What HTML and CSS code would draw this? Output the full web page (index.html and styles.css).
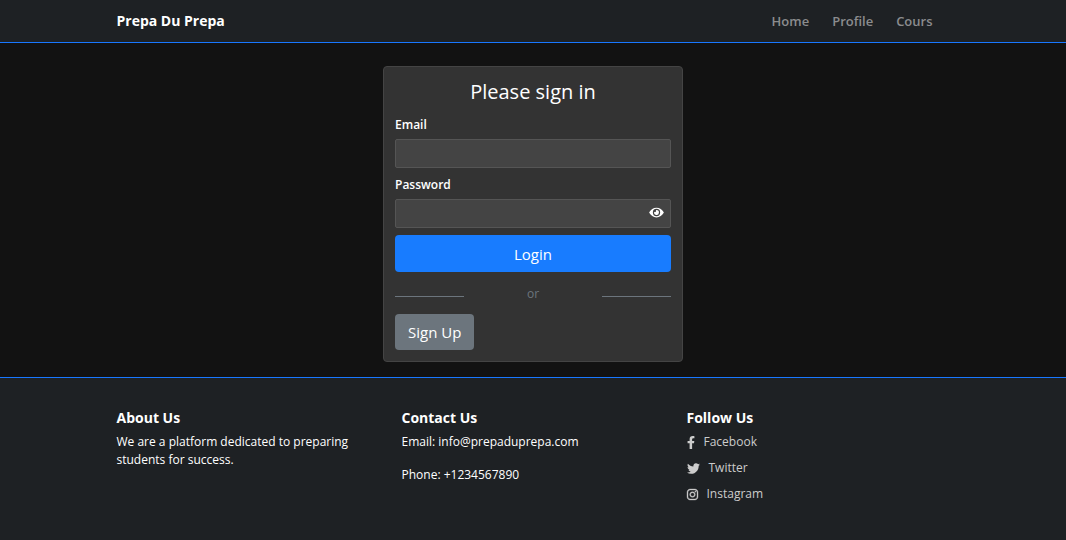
FILE: index.html
```html
<!DOCTYPE html>
<html lang="en">
<head>
<meta charset="utf-8">
<meta name="viewport" content="width=device-width, initial-scale=1">
<title>Prepa Du Prepa</title>
<link rel="stylesheet" href="styles.css">
</head>
<body>
<header class="navbar">
  <div class="container navbar-inner">
    <a class="brand" href="#">Prepa Du Prepa</a>
    <nav class="nav-links">
      <a href="#">Home</a>
      <a href="#">Profile</a>
      <a href="#">Cours</a>
    </nav>
  </div>
</header>
<main class="main">
  <section class="card">
    <h1 class="card-title">Please sign in</h1>
    <form class="form">
      <label class="label" for="email">Email</label>
      <input class="input" type="email" id="email">
      <label class="label" for="password">Password</label>
      <div class="password-field">
        <input class="input" type="password" id="password">
        <button class="toggle" type="button" aria-label="Show password">
          <svg class="eye" viewBox="0 0 576 512" aria-hidden="true"><path fill="currentColor" d="M572.52 241.4C518.29 135.59 410.93 64 288 64S57.68 135.64 3.48 241.41a32.35 32.35 0 0 0 0 29.19C57.71 376.41 165.07 448 288 448s230.32-71.64 284.52-177.41a32.35 32.35 0 0 0 0-29.19zM288 400a144 144 0 1 1 144-144 143.93 143.93 0 0 1-144 144zm0-240a95.31 95.31 0 0 0-25.31 3.79 47.85 47.85 0 0 1-66.9 66.9A95.78 95.78 0 1 0 288 160z"/></svg>
        </button>
      </div>
      <button class="btn btn-primary" type="submit">Login</button>
      <div class="divider"><span class="rule"></span><span class="or">or</span><span class="rule"></span></div>
      <button class="btn btn-secondary" type="button">Sign Up</button>
    </form>
  </section>
</main>
<footer class="footer">
  <div class="container footer-grid">
    <section>
      <h2 class="footer-title">About Us</h2>
      <p>We are a platform dedicated to preparing students for success.</p>
    </section>
    <section>
      <h2 class="footer-title">Contact Us</h2>
      <p>Email: info@prepaduprepa.com</p>
      <p>Phone: +1234567890</p>
    </section>
    <section>
      <h2 class="footer-title">Follow Us</h2>
      <ul class="social">
        <li><a href="#"><svg class="icon icon-facebook" viewBox="0 0 320 512" aria-hidden="true"><path fill="currentColor" d="M279.14 288l14.22-92.66h-88.91v-60.13c0-25.35 12.42-50.06 52.24-50.06h40.42V6.26S260.43 0 225.36 0c-73.22 0-121.08 44.38-121.08 124.72v70.62H22.89V288h81.39v224h100.17V288z"/></svg>Facebook</a></li>
        <li><a href="#"><svg class="icon icon-twitter" viewBox="0 0 512 512" aria-hidden="true"><path fill="currentColor" d="M459.37 151.716c.325 4.548.325 9.097.325 13.645 0 138.72-105.583 298.558-298.558 298.558-59.452 0-114.68-17.219-161.137-47.106 8.447.974 16.568 1.299 25.34 1.299 49.055 0 94.213-16.568 130.274-44.832-46.132-.975-84.792-31.188-98.112-72.772 6.498.974 12.995 1.624 19.818 1.624 9.421 0 18.843-1.3 27.614-3.573-48.081-9.747-84.143-51.98-84.143-102.985v-1.299c13.969 7.797 30.214 12.67 47.431 13.319-28.264-18.843-46.781-51.005-46.781-87.391 0-19.492 5.197-37.36 14.294-52.954 51.655 63.675 129.3 105.258 216.365 109.807-1.624-7.797-2.599-15.918-2.599-24.04 0-57.828 46.782-104.934 104.934-104.934 30.213 0 57.502 12.67 76.67 33.137 23.715-4.548 46.456-13.32 66.599-25.34-7.798 24.366-24.366 44.833-46.132 57.827 21.117-2.273 41.584-8.122 60.426-16.243-14.292 20.791-32.161 39.308-52.628 54.253z"/></svg>Twitter</a></li>
        <li><a href="#"><svg class="icon icon-instagram" viewBox="0 0 448 512" aria-hidden="true"><path fill="currentColor" stroke="currentColor" stroke-width="14" d="M224.1 141c-63.6 0-114.9 51.3-114.9 114.9s51.3 114.9 114.9 114.9S339 319.5 339 255.9 287.7 141 224.1 141zm0 189.6c-41.1 0-74.7-33.5-74.7-74.7s33.5-74.7 74.7-74.7 74.7 33.5 74.7 74.7-33.6 74.7-74.7 74.7zm146.4-194.3c0 14.9-12 26.8-26.8 26.8-14.9 0-26.8-12-26.8-26.8s12-26.8 26.8-26.8 26.8 12 26.8 26.8zm76.1 27.2c-1.7-35.9-9.9-67.7-36.2-93.9-26.2-26.2-58-34.4-93.9-36.2-37-2.1-147.9-2.1-184.9 0-35.8 1.7-67.6 9.9-93.9 36.1s-34.4 58-36.2 93.9c-2.1 37-2.1 147.9 0 184.9 1.7 35.9 9.9 67.7 36.2 93.9s58 34.4 93.9 36.2c37 2.1 147.9 2.1 184.9 0 35.9-1.7 67.7-9.9 93.9-36.2 26.2-26.2 34.4-58 36.2-93.9 2.1-37 2.1-147.8 0-184.8zM398.8 388c-7.8 19.6-22.9 34.7-42.6 42.6-29.5 11.7-99.5 9-132.1 9s-102.7 2.6-132.1-9c-19.6-7.8-34.7-22.9-42.6-42.6-11.7-29.5-9-99.5-9-132.1s-2.6-102.7 9-132.1c7.8-19.6 22.9-34.7 42.6-42.6 29.5-11.7 99.5-9 132.1-9s102.7-2.6 132.1 9c19.6 7.8 34.7 22.9 42.6 42.6 11.7 29.5 9 99.5 9 132.1s2.7 102.7-9 132.1z"/></svg>Instagram</a></li>
      </ul>
    </section>
  </div>
</footer>
</body>
</html>
```
FILE: styles.css
```css
* { box-sizing: border-box; }
body {
  margin: 0;
  background: #121212;
  color: #fff;
  font-family: "Open Sans", "Noto Sans", sans-serif;
  font-size: 12px;
  line-height: 18px;
}
a { color: inherit; text-decoration: none; }
h1, h2, p, ul { margin: 0; padding: 0; }
button, input { font: inherit; color: inherit; }
.container { max-width: 855px; margin: 0 auto; padding: 0 11px; }
.navbar { background: #1e2124; border-bottom: 1px solid #1877ff; }
.navbar-inner { display: flex; align-items: center; justify-content: space-between; height: 42px; }
.brand { font-size: 14px; font-weight: 700; }
.nav-links { display: flex; gap: 23px; padding-right: 17px; font-size: 13px; font-weight: 600; color: #8b8c8e; }
.main { padding: 23px 16px 15px; }
.card {
  max-width: 300px;
  margin: 0 auto;
  padding: 11px;
  background: #333;
  border: 1px solid #444;
  border-radius: 4px;
}
.card-title { font-size: 20px; font-weight: 400; line-height: 28px; text-align: center; margin-bottom: 10px; }
.form { display: flex; flex-direction: column; }
.label { font-size: 12px; font-weight: 600; margin-bottom: 5px; }
.input {
  width: 100%;
  height: 29px;
  padding: 4px 8px;
  margin-bottom: 8px;
  background: #444;
  border: 1px solid #555;
  border-radius: 2px;
}
.password-field { position: relative; }
.password-field .input { display: block; margin-bottom: 7px; }
.toggle { position: absolute; top: 0; right: 0; height: 27px; padding: 0 7px; border: 0; background: none; color: #fff; }
.eye { display: block; width: 15px; height: 13px; }
.btn { border: 0; border-radius: 4px; padding: 6px 13px; font-size: 15px; line-height: 24px; }
.btn-primary { background: #187cff; height: 37px; }
.btn-secondary { background: #6c757d; align-self: flex-start; }
.divider { display: grid; grid-template-columns: 1fr 2fr 1fr; align-items: center; margin: 13px 0 11px; color: #6c757d; }
.rule { border-bottom: 1px solid #6c757d; padding-top: 4px; }
.or { text-align: center; }
.footer { background: #1e2124; border-top: 1px solid #1877ff; padding: 30px 0; }
.footer-grid { display: grid; grid-template-columns: repeat(3, 1fr); gap: 22px; }
.footer-title { font-size: 14px; font-weight: 700; line-height: 20px; margin-bottom: 5px; }
.footer p { margin-bottom: 15px; }
.social { list-style: none; color: #ccc; }
.social li { margin-bottom: 8px; }
.social a { display: flex; align-items: center; gap: 9px; }
.icon { height: 13px; overflow: visible; }
.icon-facebook { width: 8px; }
.icon-twitter { width: 13px; }
.icon-instagram { width: 11px; }
```
